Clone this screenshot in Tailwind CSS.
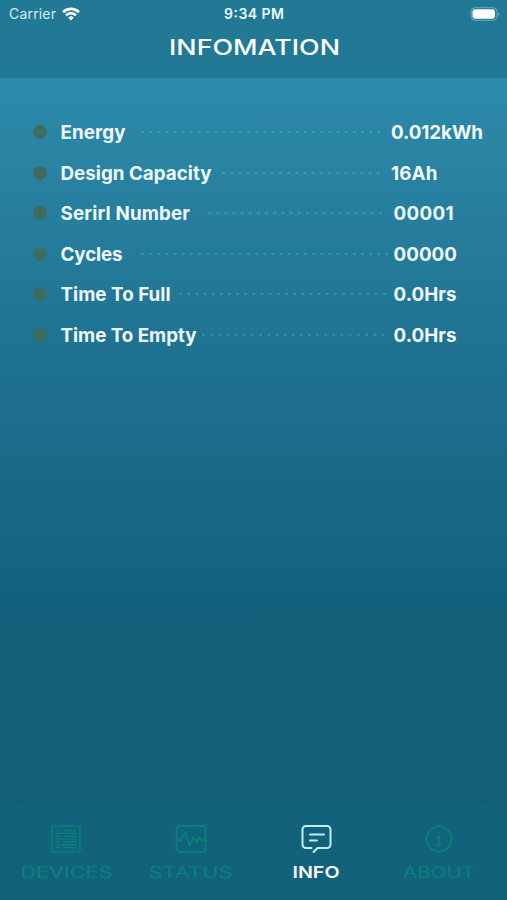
<!DOCTYPE html>
<html lang="en">
  <head>
    <meta charset="UTF-8" />
    <meta name="viewport" content="width=device-width, initial-scale=1.0" />
    <title>Infomation</title>
    <script src="https://cdn.jsdelivr.net/npm/@tailwindcss/browser@4"></script>
  </head>
  <body class="bg-[#116079]">
    <div
      class="flex h-[900px] w-[507px] flex-col overflow-hidden bg-linear-to-b from-[#2e8bab] from-[78px] via-[#1f7291] via-[350px] to-[#115f79] to-[650px] font-['Inter','Liberation_Sans',sans-serif] text-white"
    >
      <!-- Header -->
      <header class="h-[78px] shrink-0 bg-[#217996]">
        <div class="grid h-[27px] grid-cols-3 items-center pr-[7px] pl-[9px]">
          <div class="flex items-center gap-1.5 text-[14px] text-[#d8edf3]">
            <svg class="h-[18px] w-[47px]" fill="currentColor">
              <text x="0" y="14" textLength="47">Carrier</text>
            </svg>
            <svg class="h-[14px] w-[18px] text-white" viewBox="0 0 18 14" fill="none" stroke="currentColor" stroke-width="2.6">
              <path d="M1 5.2a11.4 11.4 0 0 1 16 0" />
              <path d="M4 8.3a7.1 7.1 0 0 1 10 0" />
              <path d="M9 13.4 6.3 10.7a3.8 3.8 0 0 1 5.4 0Z" fill="currentColor" stroke="none" />
            </svg>
          </div>
          <svg class="h-[18px] w-[62px] justify-self-center text-[14px] font-semibold" fill="#eef8fb">
            <text x="1" y="14" textLength="60">9:34 PM</text>
          </svg>
          <svg class="h-[14px] w-[31px] justify-self-end" viewBox="0 0 31 14">
            <rect x="2" y="0.7" width="26" height="12.6" rx="4" fill="none" stroke="#6fabbf" />
            <rect x="3.5" y="2.3" width="22.5" height="9.4" rx="2.4" fill="#fff" />
            <path d="M29.3 5v4.4c1.6-.7 1.6-3.7 0-4.4Z" fill="#6fabbf" />
          </svg>
        </div>
        <h1 class="flex justify-center pt-2">
          <svg class="h-6 w-[174px] text-[21px] font-medium" fill="currentColor">
            <text x="2" y="19.5" textLength="171" lengthAdjust="spacingAndGlyphs">INFOMATION</text>
          </svg>
        </h1>
      </header>

      <!-- Readings -->
      <main class="flex-1 pt-[34px] pl-[33px] text-[18.8px] font-bold text-[#eff9fd]">
        <div class="flex h-[40.5px] items-center">
          <span class="mr-[13px] size-[14px] rounded-full bg-[#3e6c60]"></span>
          <svg class="h-6 w-[81px]" fill="currentColor"><text x="0.5" y="19" textLength="65">Energy</text></svg>
          <svg class="h-[2px] w-[240px]"><path d="M0 1h240" stroke="#25b8ae" stroke-width="1.6" stroke-dasharray="3 5.15" /></svg>
          <svg class="ml-[10px] h-6 w-[100px]" fill="currentColor"><text x="0" y="19" textLength="92">0.012kWh</text></svg>
        </div>
        <div class="flex h-[40.5px] items-center">
          <span class="mr-[13px] size-[14px] rounded-full bg-[#3e6c60]"></span>
          <svg class="h-6 w-[162px]" fill="currentColor"><text x="0.5" y="19" textLength="151">Design Capacity</text></svg>
          <svg class="h-[2px] w-[159px]"><path d="M0 1h159" stroke="#24b4aa" stroke-width="1.6" stroke-dasharray="3 5.15" /></svg>
          <svg class="ml-[10px] h-6 w-[100px]" fill="currentColor"><text x="0" y="19" textLength="46.5">16Ah</text></svg>
        </div>
        <div class="flex h-[40.5px] items-center">
          <span class="mr-[13px] size-[14px] rounded-full bg-[#3e6c60]"></span>
          <svg class="h-6 w-[148px]" fill="currentColor"><text x="0.5" y="19" textLength="129.5">Serirl Number</text></svg>
          <svg class="h-[2px] w-[175px]"><path d="M0 1h175" stroke="#22b0a5" stroke-width="1.6" stroke-dasharray="3 5.15" /></svg>
          <svg class="ml-[10px] h-6 w-[100px]" fill="currentColor"><text x="0.5" y="19" textLength="60">00001</text></svg>
        </div>
        <div class="flex h-[40.5px] items-center">
          <span class="mr-[13px] size-[14px] rounded-full bg-[#3e6c60]"></span>
          <svg class="h-6 w-[81px]" fill="currentColor"><text x="0.5" y="19" textLength="62">Cycles</text></svg>
          <svg class="h-[2px] w-[247px]"><path d="M0 1h247" stroke="#20ada2" stroke-width="1.6" stroke-dasharray="3 5.15" /></svg>
          <svg class="ml-[5px] h-6 w-[100px]" fill="currentColor"><text x="0.5" y="19" textLength="63.5">00000</text></svg>
        </div>
        <div class="flex h-[40.5px] items-center">
          <span class="mr-[13px] size-[14px] rounded-full bg-[#3e6c60]"></span>
          <svg class="h-6 w-[119px]" fill="currentColor"><text x="0.5" y="19" textLength="110">Time To Full</text></svg>
          <svg class="h-[2px] w-[207px]"><path d="M0 1h207" stroke="#20ada2" stroke-width="1.6" stroke-dasharray="3 5.15" /></svg>
          <svg class="ml-[7px] h-6 w-[100px]" fill="currentColor"><text x="0.5" y="19" textLength="63">0.0Hrs</text></svg>
        </div>
        <div class="flex h-[40.5px] items-center">
          <span class="mr-[13px] size-[14px] rounded-full bg-[#3e6c60]"></span>
          <svg class="h-6 w-[142px]" fill="currentColor"><text x="0.5" y="19" textLength="136">Time To Empty</text></svg>
          <svg class="h-[2px] w-[182px]"><path d="M0 1h182" stroke="#1ea79c" stroke-width="1.6" stroke-dasharray="3 5.15" /></svg>
          <svg class="ml-[9px] h-6 w-[100px]" fill="currentColor"><text x="0.5" y="19" textLength="63">0.0Hrs</text></svg>
        </div>
      </main>

      <!-- Tab bar -->
      <nav class="flex h-[98px] shrink-0 rounded-t-[28px] bg-[#12627c] pt-[22px] pl-[3px] text-[16px] text-[#08817a]">
        <a class="flex w-[125px] flex-col items-center">
          <svg class="h-[30px] w-8" viewBox="0 0 32 30" fill="none" stroke="currentColor" stroke-width="1.7">
            <rect x="2" y="2" width="28" height="26" rx="1.5" />
            <path d="M6 6.6h4M13 6.6h13M6 12.2h4M13 12.2h13M6 17.8h4M13 17.8h13M6 23.4h4M13 23.4h13" stroke-width="1.5" />
            <path d="M5 9.4h22M5 15h22M5 20.6h22" stroke-width="1.2" />
          </svg>
          <svg class="mt-2 h-5 w-[92px]" fill="currentColor"><text x="0.5" y="15.5" textLength="92" lengthAdjust="spacingAndGlyphs">DEVICES</text></svg>
        </a>
        <a class="flex w-[125px] flex-col items-center">
          <svg class="h-[30px] w-8" viewBox="0 0 32 30" fill="none" stroke="currentColor" stroke-width="1.8" stroke-linejoin="round">
            <rect x="1.5" y="2" width="29" height="26" rx="3" />
            <path d="M3 16h3l4.5-8 4 13.5 4-8.5 3 5.5 3-5.5 2 3H30" />
          </svg>
          <svg class="mt-2 h-5 w-[85px]" fill="currentColor"><text x="0.5" y="15.5" textLength="84" lengthAdjust="spacingAndGlyphs">STATUS</text></svg>
        </a>
        <a class="flex w-[125px] flex-col items-center text-white">
          <svg class="h-[30px] w-8" viewBox="0 0 32 30" fill="none" stroke="#c3eef0" stroke-width="2" stroke-linecap="round" stroke-linejoin="round">
            <path d="M11.5 24H6a3.5 3.5 0 0 1-3.5-3.5v-15A3.5 3.5 0 0 1 6 2h21a3.5 3.5 0 0 1 3.5 3.5v15A3.500 3.500 0 0 1 27 24h-9.500l-4 4" />
            <path d="M10 10.5h14M10 16.5h7" />
          </svg>
          <svg class="mt-2 h-5 w-[48px] font-semibold" fill="currentColor"><text x="0.5" y="15.5" textLength="47" lengthAdjust="spacingAndGlyphs">INFO</text></svg>
        </a>
        <a class="flex w-[122px] flex-col items-center">
          <svg class="h-[30px] w-8" viewBox="0 0 32 30" fill="none" stroke="currentColor" stroke-width="2">
            <circle cx="16" cy="15" r="12.5" />
            <path d="M13.5 12.5h2.800v9M13.5 21.500h5M15.2 8.500h2.300" stroke-width="1.6" />
          </svg>
          <svg class="mt-2 h-5 w-[72px]" fill="currentColor"><text x="0" y="15.5" textLength="72" lengthAdjust="spacingAndGlyphs">ABOUT</text></svg>
        </a>
      </nav>
    </div>
  </body>
</html>
